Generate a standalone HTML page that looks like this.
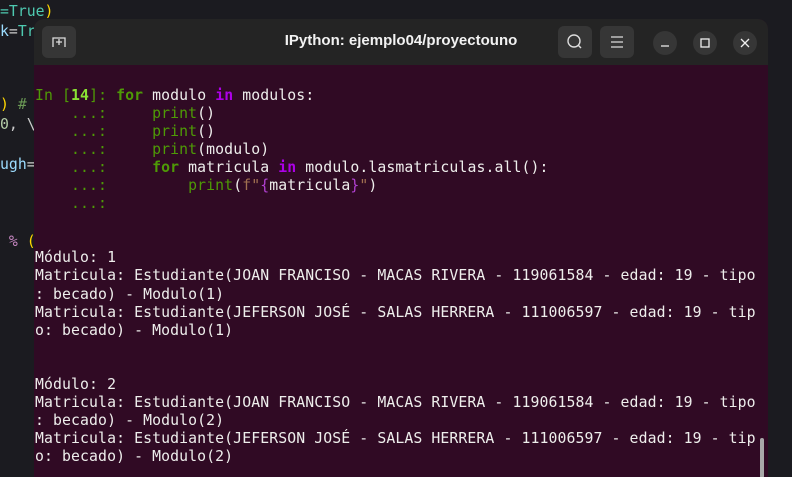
<!DOCTYPE html>
<html><head><meta charset="utf-8"><style>
html,body{margin:0;width:792px;height:477px;overflow:hidden}
body{background:#1b1b20;position:relative;font-family:"DejaVu Sans Mono","Liberation Mono",monospace}
.ed{position:absolute;left:0;font-size:14.8px;white-space:pre;color:#ccc}
.win{position:absolute;left:34px;top:19px;width:734px;height:458px;background:#300a24;border-radius:10px 10px 0 0;overflow:hidden}
.tb{position:absolute;left:0;top:0;width:734px;height:46px;background:#242424}
.btn{position:absolute;top:7px;width:34px;height:32px;background:#363636;border-radius:6px}
.cb{position:absolute;top:12px;width:24px;height:24px;background:#363636;border-radius:50%}
.title{position:absolute;left:0;width:734px;top:13px;text-align:center;color:#f2f2f2;font:bold 15px "Liberation Sans",sans-serif}
.term{position:absolute;left:1px;top:68px;font-size:14.8px;line-height:18.05px;letter-spacing:0.1px;white-space:pre;color:#eeeeec}
.g{color:#4e9a06}.gb{color:#8ae234;font-weight:bold}.k{color:#4e9a06;font-weight:bold}.m{color:#ad00e8;font-weight:bold}.br{color:#a07050}.mg{color:#b040d0}
</style></head><body>
<div class="ed" style="top:3px"><span style="color:#4ec9b0">=True</span><span style="color:#ffd700">)</span></div>
<div class="ed" style="top:23px"><span style="color:#9cdcfe">k</span><span style="color:#ccc">=</span><span style="color:#4ec9b0">Tr</span></div>
<div class="ed" style="top:96px"><span style="color:#ffd700">)</span> <span style="color:#6a9955">#</span></div>
<div class="ed" style="top:116px"><span style="color:#b5cea8">0</span>, \</div>
<div class="ed" style="top:156px"><span style="color:#9cdcfe">ugh</span>=</div>
<div class="ed" style="top:233px"> <span style="color:#c586c0">%</span> <span style="color:#ffd700">(</span></div>
<div class="win">
<div class="tb">
<div class="btn" style="left:8px"><svg width="34" height="32"><path d="M11 21 V12 H23 V21 M17 13 V19 M14 16 H20" stroke="#ddd" stroke-width="1.3" fill="none"/></svg></div>
<div class="title">IPython: ejemplo04/proyectouno</div>
<div class="btn" style="left:524px"><svg width="34" height="32"><circle cx="16" cy="15" r="6" stroke="#ddd" stroke-width="1.4" fill="none"/><path d="M20 19 L23 22" stroke="#ddd" stroke-width="1.4"/></svg></div>
<div class="btn" style="left:566px"><svg width="34" height="32"><path d="M11 11H23M11 16H23M11 21H23" stroke="#ddd" stroke-width="1.3"/></svg></div>
<div class="cb" style="left:619px"><svg width="24" height="24"><path d="M8 15H16" stroke="#eee" stroke-width="1.3"/></svg></div>
<div class="cb" style="left:659px"><svg width="24" height="24"><rect x="8" y="8" width="8" height="8" stroke="#eee" stroke-width="1.3" fill="none"/></svg></div>
<div class="cb" style="left:699px"><svg width="24" height="24"><path d="M8 8L16 16M16 8L8 16" stroke="#eee" stroke-width="1.3"/></svg></div>
</div>
<div class="term"><span class="g">In [</span><span class="gb">14</span><span class="g">]: </span><span class="k">for</span> modulo <span class="m">in</span> modulos:
<span class="g">    ...:     print</span>()
<span class="g">    ...:     print</span>()
<span class="g">    ...:     print</span>(modulo)
<span class="g">    ...:     </span><span class="k">for</span> matricula <span class="m">in</span> modulo.lasmatriculas.all():
<span class="g">    ...:         print</span>(<span class="br">f"</span><span class="mg">{</span>matricula<span class="mg">}</span><span class="br">"</span>)
<span class="g">    ...:</span>


Módulo: 1
Matricula: Estudiante(JOAN FRANCISO - MACAS RIVERA - 119061584 - edad: 19 - tipo
: becado) - Modulo(1)
Matricula: Estudiante(JEFERSON JOSÉ - SALAS HERRERA - 111006597 - edad: 19 - tip
o: becado) - Modulo(1)


Módulo: 2
Matricula: Estudiante(JOAN FRANCISO - MACAS RIVERA - 119061584 - edad: 19 - tipo
: becado) - Modulo(2)
Matricula: Estudiante(JEFERSON JOSÉ - SALAS HERRERA - 111006597 - edad: 19 - tip
o: becado) - Modulo(2)</div>
<div style="position:absolute;left:726px;top:419px;width:4px;height:40px;background:#a8a8a8;border-radius:2px"></div>
</div>
</body></html>
